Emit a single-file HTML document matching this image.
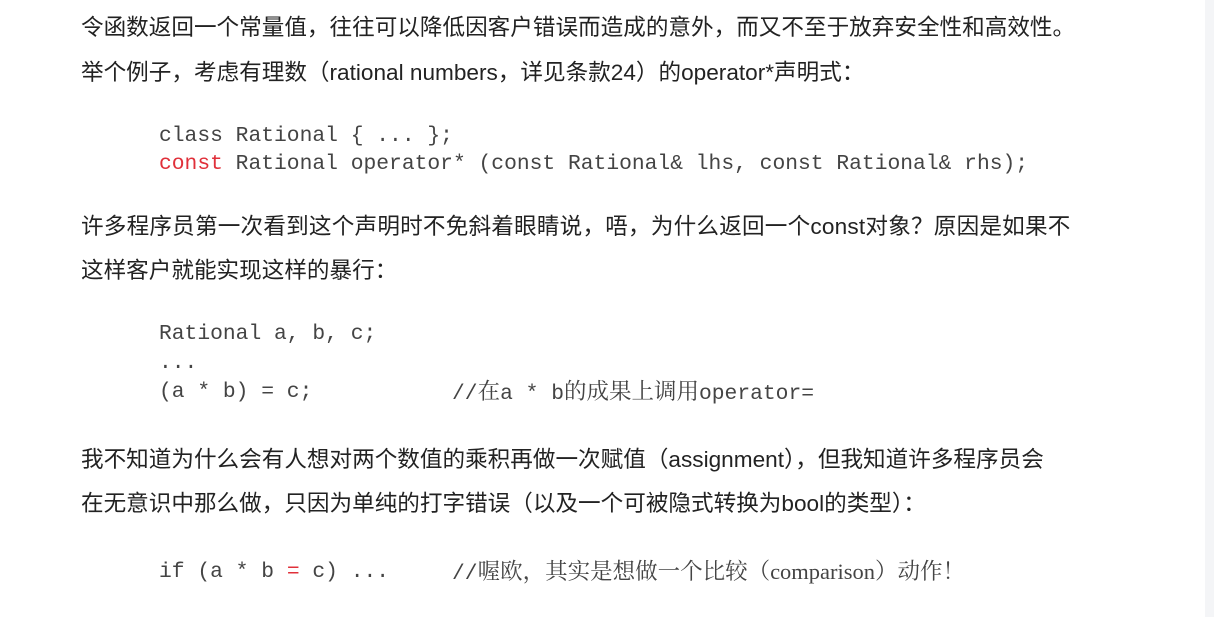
<!DOCTYPE html>
<html><head><meta charset="utf-8"><style>
body{margin:0;width:1214px;height:617px;background:#fff;position:relative;overflow:hidden}
.sb{position:absolute;left:1205px;top:0;width:9px;height:617px;background:#f4f5f7}
.p{position:absolute;left:81px;font:22.6px "Liberation Sans","Noto Sans CJK SC",sans-serif;color:#222;white-space:nowrap;line-height:28px}
.c{position:absolute;left:159px;font:21.3px "Liberation Mono","Noto Sans CJK SC",monospace;color:#444;white-space:pre;line-height:28px}
.m{position:absolute;left:452px;font:21.3px "Liberation Mono",monospace;color:#444;white-space:pre;line-height:28px}
.r{color:#e0303a}
.s{font-family:"Liberation Serif","Noto Serif CJK SC",serif;font-size:22.5px}
</style></head><body>
<div class="sb"></div>
<div class="p" style="top:14px">令函数返回一个常量值，往往可以降低因客户错误而造成的意外，而又不至于放弃安全性和高效性。</div>
<div class="p" style="top:59px">举个例子，考虑有理数（rational numbers，详见条款24）的operator*声明式：</div>
<div class="c" style="top:122px">class Rational { ... };</div>
<div class="c" style="top:150px"><span class="r">const</span> Rational operator* (const Rational&amp; lhs, const Rational&amp; rhs);</div>
<div class="p" style="top:213px;letter-spacing:0.2px">许多程序员第一次看到这个声明时不免斜着眼睛说，唔，为什么返回一个const对象？原因是如果不</div>
<div class="p" style="top:257px">这样客户就能实现这样的暴行：</div>
<div class="c" style="top:320px">Rational a, b, c;</div>
<div class="c" style="top:349px">...</div>
<div class="c" style="top:378px">(a * b) = c;</div>
<div class="m" style="top:378px">//<span class="s">在</span>a * b<span class="s">的成果上调用</span>operator=</div>
<div class="p" style="top:446px">我不知道为什么会有人想对两个数值的乘积再做一次赋值（assignment），但我知道许多程序员会</div>
<div class="p" style="top:490px">在无意识中那么做，只因为单纯的打字错误（以及一个可被隐式转换为bool的类型）：</div>
<div class="c" style="top:558px">if (a * b <span class="r">=</span> c) ...</div>
<div class="m" style="top:558px">//<span class="s">喔欧，其实是想做一个比较（comparison）动作！</span></div>
</body></html>
